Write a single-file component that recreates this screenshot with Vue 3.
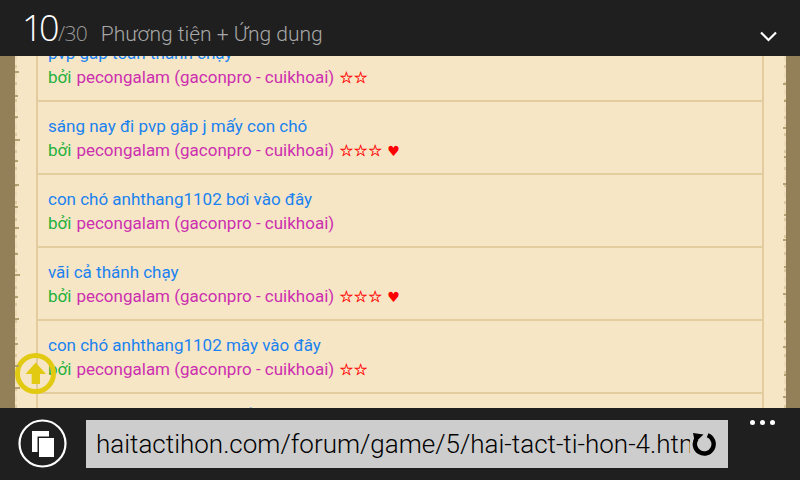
<script setup>
const rows = [
  { title: 'pvp găp toàn thánh chạy', stars: '☆☆', heart: false },
  { title: 'sáng nay đi pvp găp j mấy con chó', stars: '☆☆☆', heart: true },
  { title: 'con chó anhthang1102 bơi vào đây', stars: '', heart: false },
  { title: 'vãi cả thánh chạy', stars: '☆☆☆', heart: true },
  { title: 'con chó anhthang1102 mày vào đây', stars: '☆☆', heart: false },
  { title: 'con chó anhthang1102 mẤy vào đây', stars: '', heart: false },
]
const leftNubs = [
  [15, 4], [39, 3], [60, 3], [83, 5], [104, 3], [128, 4], [150, 3], [171, 4], [197, 3],
  [218, 5], [240, 3], [262, 4], [287, 3], [309, 4], [331, 5],
]
const rightNubs = [
  [27, 3], [44, 2], [71, 3], [100, 2], [127, 3], [158, 2], [183, 3], [210, 2], [237, 3],
  [265, 2], [290, 3], [318, 2], [340, 3],
]
</script>

<template>
  <div class="screen">
    <header class="topbar">
      <span class="count">10</span>
      <span class="total">/30</span>
      <span class="section">Phương tiện + Ứng dụng</span>
      <svg class="chevron" width="18" height="12" viewBox="0 0 18 12">
        <path d="M1 1.5 L8.5 9 L16 1.5" fill="none" stroke="#fff" stroke-width="2.2" />
      </svg>
    </header>

    <main class="page">
      <div class="edge edge-left">
        <i v-for="n in leftNubs" :key="n[0]" class="nub" :style="{ top: n[0] + 'px', width: n[1] + 'px' }"></i>
      </div>
      <div class="edge edge-right">
        <i v-for="n in rightNubs" :key="n[0]" class="nub" :style="{ top: n[0] + 'px', width: n[1] + 'px' }"></i>
      </div>
      <ul class="list">
        <li v-for="(r, i) in rows" :key="i" class="row">
          <a class="title">{{ r.title }}</a>
          <div class="meta">
            <span class="by">bởi</span>
            <span class="author">pecongalam (gaconpro - cuikhoai)</span>
            <span v-if="r.stars" class="stars">{{ r.stars }}</span>
            <span v-if="r.heart" class="heart">♥</span>
          </div>
        </li>
      </ul>
      <svg class="to-top" width="44" height="44" viewBox="0 0 44 44">
        <circle cx="21.5" cy="21.5" r="18" fill="none" stroke="#e3ca12" stroke-width="5" />
        <path d="M21.7 10.5 L32 22 L26 22 L26 32 L17.7 32 L17.7 22 L11.5 22 Z" fill="#e3ca12" />
      </svg>
    </main>

    <footer class="bottombar">
      <svg class="tabs" width="50" height="50" viewBox="0 0 50 50">
        <circle cx="24.5" cy="24.5" r="23" fill="none" stroke="#fff" stroke-width="2.2" />
        <path d="M14 12 H31 V17.5 H19.5 V33 H14 Z" fill="#fff" />
        <rect x="21" y="19" width="15" height="19" fill="#fff" />
      </svg>
      <div class="address">
        <span class="url">haitactihon.com/forum/game/5/hai-tact-ti-hon-4.html</span>
        <svg class="reload" width="26" height="26" viewBox="0 0 26 26">
          <path d="M15.6 4.3 A9.4 9.4 0 1 1 4.6 7.6" fill="none" stroke="#000" stroke-width="4.4" />
          <path d="M1 2 L11.5 3.5 L3 11.5 Z" fill="#000" />
        </svg>
      </div>
      <div class="dots"><i></i><i></i><i></i></div>
    </footer>
  </div>
</template>

<style>
html, body { margin: 0; padding: 0; background: #1f1f1f; }
</style>

<style scoped>
.screen {
  width: 800px;
  height: 480px;
  display: flex;
  flex-direction: column;
  overflow: hidden;
  font-family: Roboto, "Noto Sans", sans-serif;
}
.topbar {
  height: 56px;
  flex: none;
  background: #1f1f1f;
  display: flex;
  align-items: baseline;
  padding: 0 22px;
  box-sizing: border-box;
  line-height: 56px;
  position: relative;
  z-index: 2;
}
.count { font-size: 36px; font-weight: 300; color: #fff; font-family: "Open Sans", sans-serif; letter-spacing: -3.5px; }
.total { font-size: 21px; font-weight: 300; color: #9a9a9a; font-family: "Open Sans", sans-serif; margin-left: 2px; letter-spacing: -0.8px; }
.section { font-size: 21px; font-weight: 300; color: #a8a8a8; margin-left: 14px; }
.chevron { position: absolute; left: 760px; top: 31px; }

.page {
  flex: 1;
  position: relative;
  background: #f7e6c5;
  overflow: hidden;
}
.edge {
  position: absolute;
  top: 0;
  bottom: 0;
  background: #937f58;
}
.edge-left { left: 0; width: 15px; }
.edge-right { right: 0; width: 14px; }
.edge::after {
  content: "";
  position: absolute;
  top: 0;
  bottom: 0;
  width: 2px;
  background: repeating-linear-gradient(180deg, #eedcb8 0 5px, #f5e4c2 5px 9px, #ddc9a0 9px 12px, #f3e1bf 12px 17px);
}
.edge-left::after { right: -2px; }
.edge-right::after { left: -2px; }
.nub {
  position: absolute;
  height: 2px;
  background: #b5a071;
  z-index: 1;
}
.edge-left .nub { left: 100%; }
.edge-right .nub { right: 100%; }

.list {
  list-style: none;
  margin: -27px 36px 0 36px;
  padding: 0;
  border-left: 2px solid #e3cc9e;
  border-right: 2px solid #e3cc9e;
}
.row {
  height: 71px;
  border-bottom: 2px solid #e3cc9e;
  padding-left: 10px;
  display: flex;
  flex-direction: column;
}
.title {
  display: block;
  margin-top: 12px;
  font-size: 17px;
  line-height: 24px;
  color: #1a82f0;
  white-space: nowrap;
}
.meta {
  font-size: 17px;
  line-height: 24px;
  white-space: nowrap;
}
.by { color: #22b13c; }
.author { color: #cc2fb0; margin-left: 5px; }
.stars, .heart { line-height: 1; font-family: "DejaVu Sans", sans-serif; color: #ff0000; }
.stars { font-size: 16px; margin-left: 5px; -webkit-text-stroke: 0.3px #ff0000; }
.heart { font-size: 14px; margin-left: 5px; }
.to-top { position: absolute; left: 14px; top: 296px; }

.bottombar {
  height: 72px;
  flex: none;
  background: #1f1f1f;
  position: relative;
  display: flex;
  align-items: flex-start;
  padding: 12px 0 0 18px;
  box-sizing: border-box;
}
.tabs { flex: none; margin-top: -1px; }
.address {
  width: 642px;
  height: 48px;
  margin-left: 18px;
  background: #cdcdcd;
  display: flex;
  align-items: center;
  overflow: hidden;
  padding-left: 10px;
  box-sizing: border-box;
}
.url {
  width: 594px;
  flex: none;
  overflow: hidden;
  white-space: nowrap;
  font-size: 26px;
  font-weight: 300;
  color: #000;
}
.reload { flex: none; margin-left: 2px; }
.dots { position: absolute; left: 750px; top: 12px; display: flex; gap: 5px; }
.dots i { width: 5px; height: 5px; border-radius: 50%; background: #fff; display: block; }
</style>
